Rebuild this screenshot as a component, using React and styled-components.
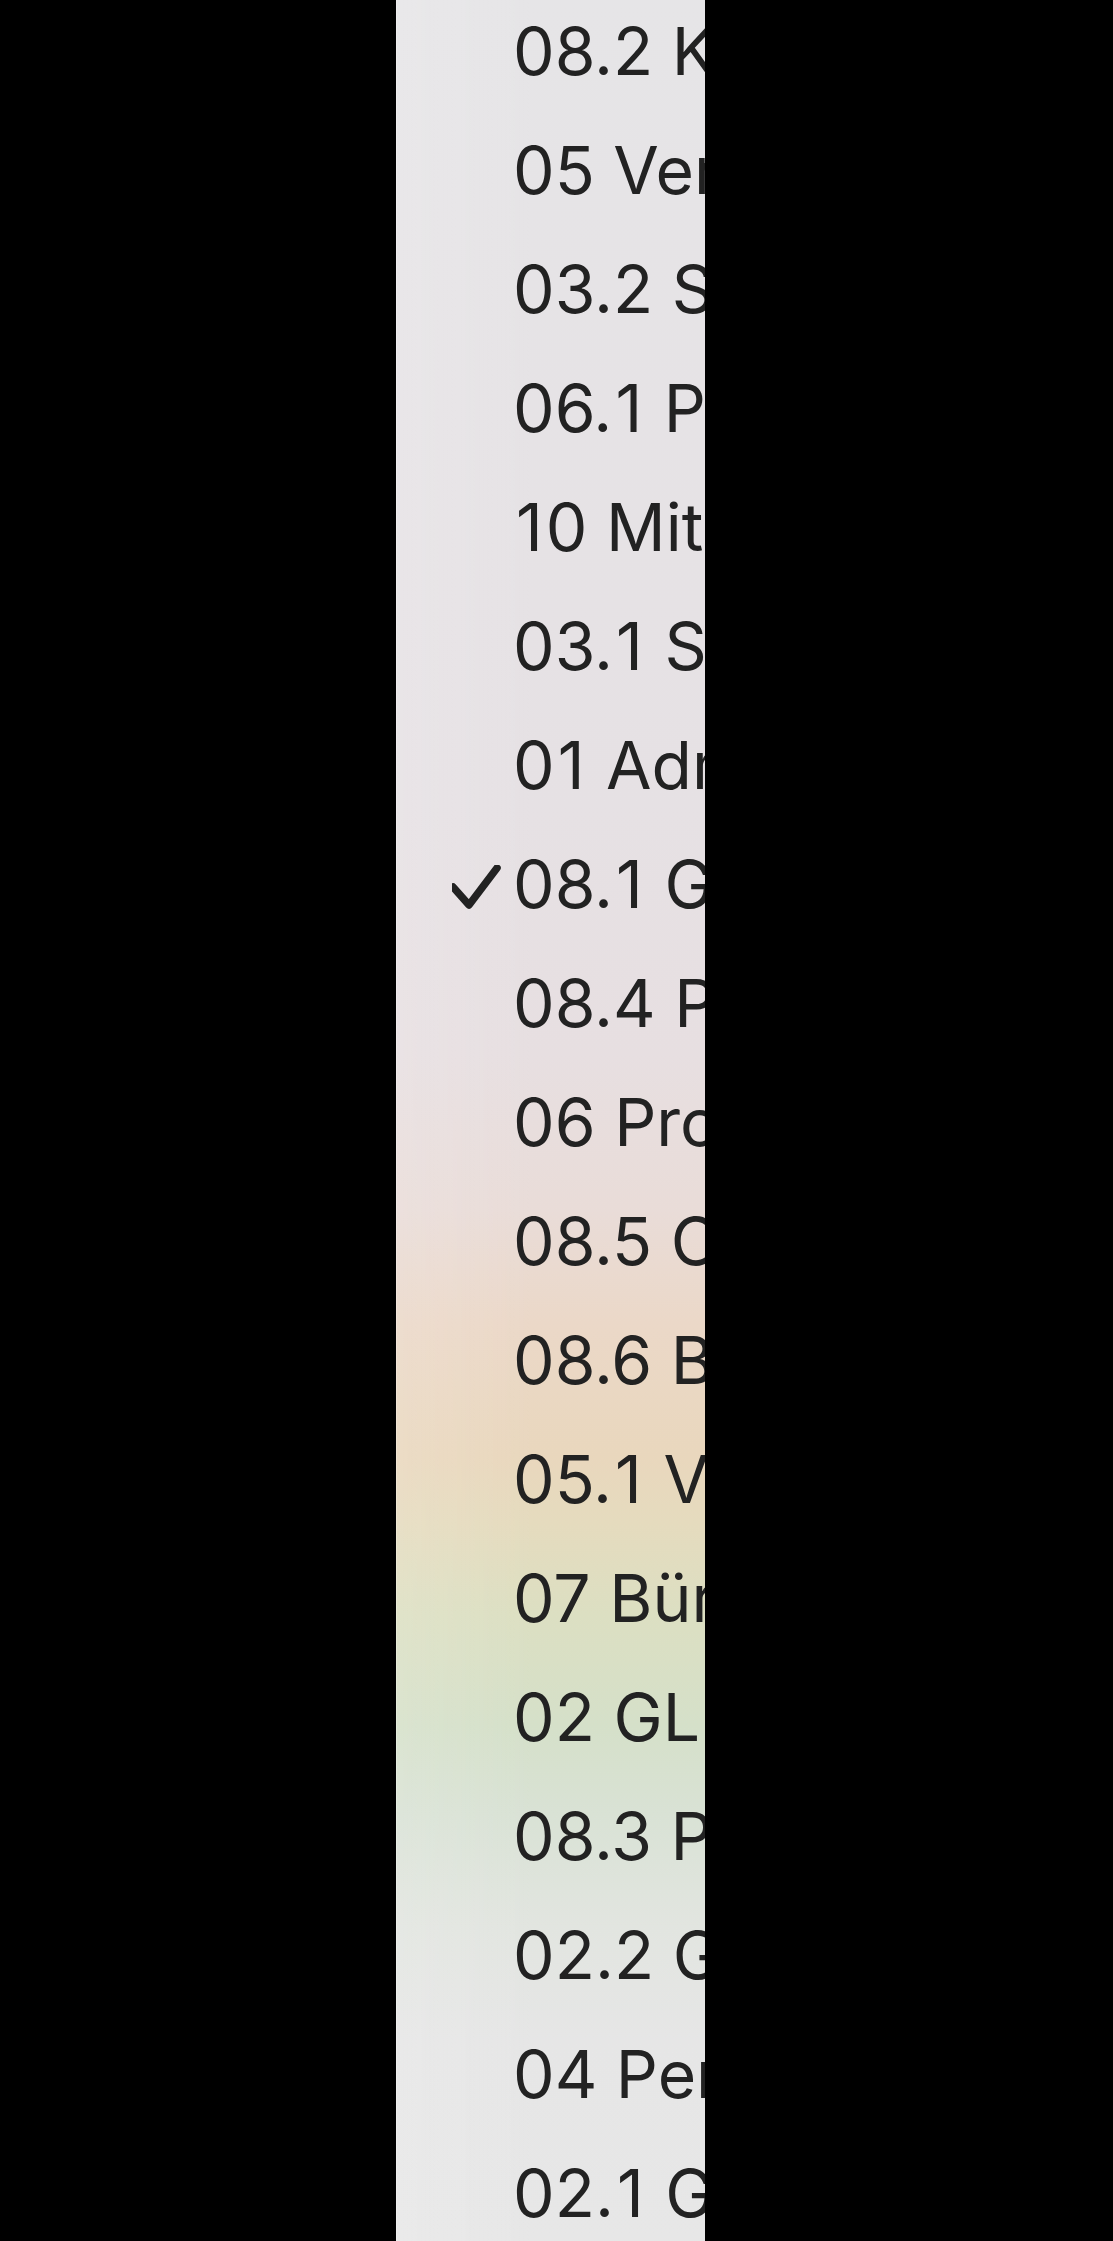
import React from 'react';
import styled, { createGlobalStyle } from 'styled-components';

const items = [
  '08.2 Kalkulation',
  '05 Verwaltung',
  '03.2 Support',
  '06.1 Planung',
  '10 Mitarbeiter',
  '03.1 Service',
  '01 Administration',
  '08.1 Geschäftsführung',
  '08.4 Personal',
  '06 Projekte',
  '08.5 Controlling',
  '08.6 Buchhaltung',
  '05.1 Vertrieb',
  '07 Büro',
  '02 GL',
  '08.3 Planung',
  '02.2 Grafik',
  '04 Personal',
  '02.1 Gestaltung',
];

const selected = '08.1 Geschäftsführung';

const GlobalStyle = createGlobalStyle`
  html, body {
    margin: 0;
    padding: 0;
    background: #000;
  }
`;

const Page = styled.div`
  display: flex;
  width: 1113px;
  height: 2241px;
  background: #000;
  overflow: hidden;
`;

const Menu = styled.div`
  margin-left: 396px;
  width: 309px;
  height: 2241px;
  overflow: hidden;
  box-sizing: border-box;
  border-left: 1px solid rgba(255, 255, 255, 0.35);
  background:
    linear-gradient(90deg, rgba(255, 255, 255, 0.12), rgba(255, 255, 255, 0) 45%),
    linear-gradient(
      180deg,
      #e6e5e7 0%,
      #e6e1e4 36%,
      #e7dfe1 47%,
      #e9dcd8 54%,
      #ebd8c8 59%,
      #e9d7bd 65%,
      #e5dbbe 68%,
      #dcdfc2 72%,
      #d5e0c9 77%,
      #d9e2d5 81%,
      #e2e5e0 86%,
      #e6e6e6 91%,
      #e7e7e7 100%
    );
`;

const List = styled.ul`
  list-style: none;
  margin: -8px 0 0;
  padding: 0;
`;

const Item = styled.li`
  position: relative;
  height: 119px;
  line-height: 119px;
  padding-left: 116px;
  font-family: Inter, 'Liberation Sans', sans-serif;
  font-size: 66px;
  font-weight: 400;
  color: #222;
  white-space: nowrap;
`;

/* the menu font sets a wider "1" than Inter does */
const One = styled.span`
  padding-left: 3px;
  letter-spacing: 3px;
`;

const Check = styled.svg`
  position: absolute;
  left: 55px;
  top: 40px;
  width: 50px;
  height: 48px;
`;

const CheckMark = () => (
  <Check viewBox="0 0 50 48">
    <polyline
      points="1,22 17,40 45,3"
      fill="none"
      stroke="#222"
      strokeWidth="7.5"
      strokeLinecap="round"
      strokeLinejoin="round"
    />
  </Check>
);

const Label = ({ text }) => {
  const space = text.indexOf(' ');
  const code = text.slice(0, space);
  const name = text.slice(space);
  return (
    <>
      {code.split('').map((ch, i) =>
        ch === '1' ? <One key={i}>1</One> : ch
      )}
      {name}
    </>
  );
};

const App = () => {
  return (
    <>
      <GlobalStyle />
      <Page>
        <Menu>
          <List>
            {items.map((label) => (
              <Item key={label}>
                {label === selected && <CheckMark />}
                <Label text={label} />
              </Item>
            ))}
          </List>
        </Menu>
      </Page>
    </>
  );
};

export default App;
